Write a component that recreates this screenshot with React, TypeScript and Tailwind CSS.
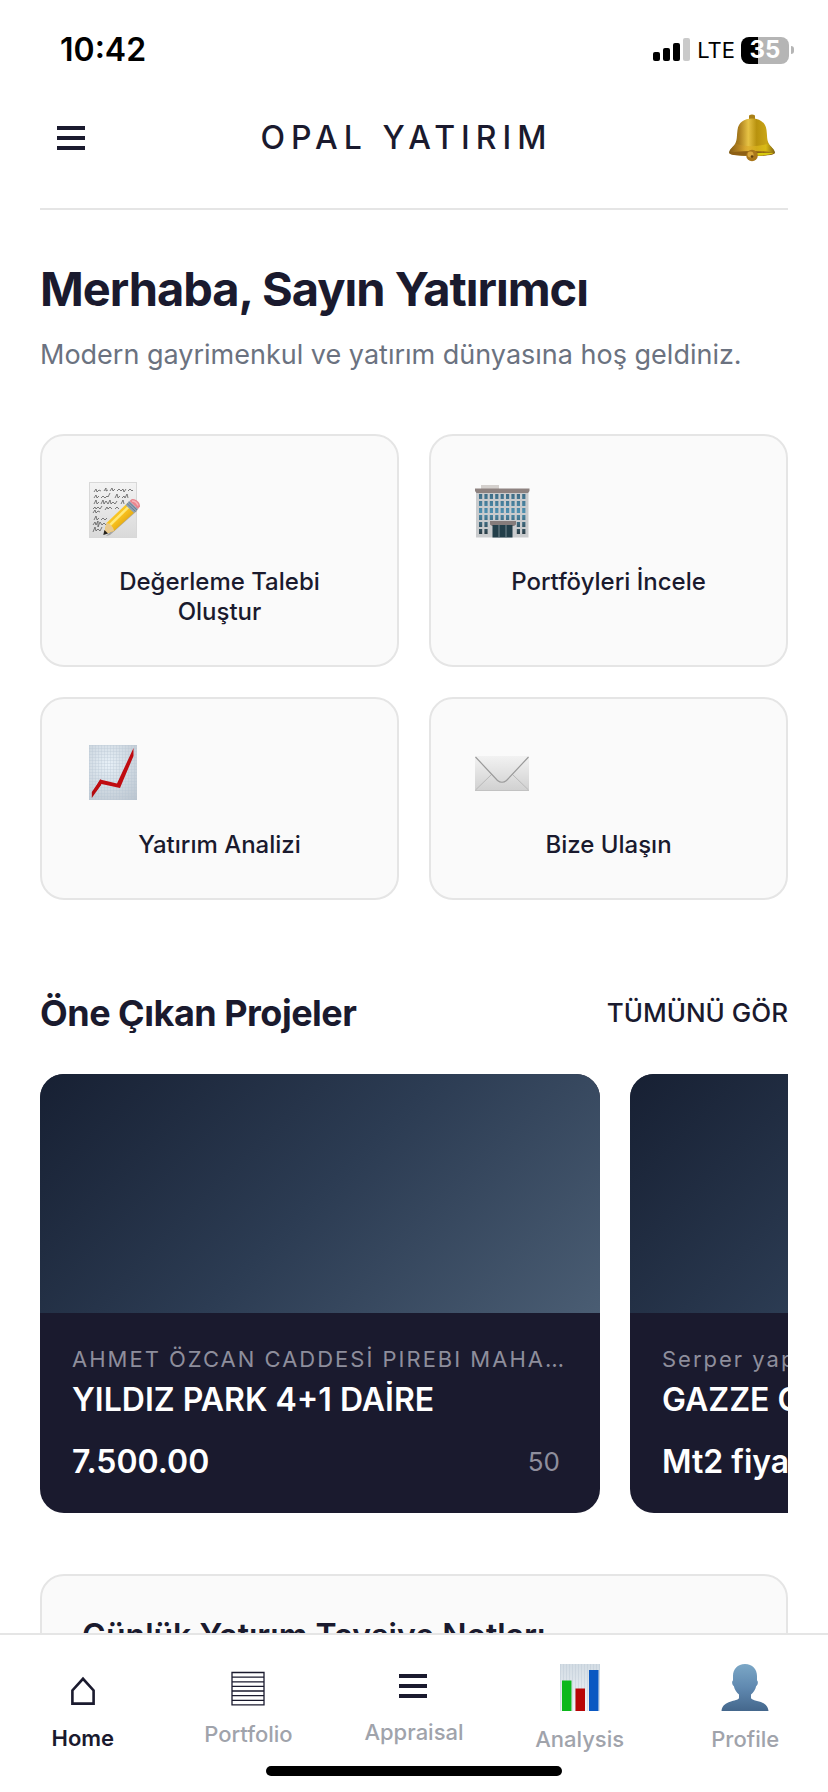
import type { ReactNode } from "react";

/* ---------- Icons ---------- */

const MenuIcon = () => (
	<svg viewBox="0 0 28 24" className="h-6 w-7" fill="#1a1a2e" aria-hidden="true">
		<rect width="28" height="4" />
		<rect y="10" width="28" height="4" />
		<rect y="20" width="28" height="4" />
	</svg>
);

const BellIcon = () => (
	<svg viewBox="0 0 48 48" className="h-12 w-12" aria-hidden="true">
		<defs>
			<linearGradient id="bellBody" x1="0" x2="1" y1="0" y2="0">
				<stop offset="0" stopColor="#7d5a14" />
				<stop offset="0.22" stopColor="#a97c1c" />
				<stop offset="0.42" stopColor="#e6c244" />
				<stop offset="0.6" stopColor="#b8920e" />
				<stop offset="0.82" stopColor="#c9a516" />
				<stop offset="1" stopColor="#6d5210" />
			</linearGradient>
			<linearGradient id="bellRim" x1="0" x2="1" y1="0" y2="0">
				<stop offset="0" stopColor="#8a5d18" />
				<stop offset="0.35" stopColor="#d9a52c" />
				<stop offset="0.8" stopColor="#e0c414" />
				<stop offset="1" stopColor="#8b6d12" />
			</linearGradient>
		</defs>
		<path d="M21 1.500q3-2 6 0v5h-6z" fill="#a98018" />
		<path
			d="M24 4.500c8 0 13.500 4 14.500 11.500.8 6 .2 9.500 2.200 13.500 1.600 3.200 6 5.500 6.300 9.500 0 1-8 3-23 3s-23-2-23-3c.3-4 4.700-6.300 6.300-9.500 2-4 1.400-7.500 2.200-13.500C10.500 8.500 16 4.500 24 4.500z"
			fill="url(#bellBody)"
		/>
		<path d="M7.500 29.500c9 3.500 24 3.500 33 0 1.500 3 5 5 6 8-12 4-33 4-45 0 1-3 4.500-5 6-8z" fill="url(#bellRim)" opacity="0.7" />
		<ellipse cx="24" cy="39.500" rx="22" ry="2.500" fill="#8e5f14" />
		<path d="M26 39.500c7-.6 14-1 20-.8-3 2-12 3-20 3z" fill="#d8cb10" />
		<circle cx="24" cy="41.500" r="5.800" fill="#a9761b" />
		<circle cx="22.500" cy="40.500" r="3" fill="#d9a63c" />
		<circle cx="24" cy="42.500" r="1.300" fill="#5e3d0e" />
	</svg>
);

const MemoIcon = () => (
	<svg viewBox="0 0 62 65" className="h-[65px] w-[62px]" aria-hidden="true">
		<defs>
			<linearGradient id="memoPaper" x1="0" x2="0" y1="0" y2="1">
				<stop offset="0" stopColor="#f3f3f3" />
				<stop offset="1" stopColor="#d9d9d9" />
			</linearGradient>
			<linearGradient id="pencil" x1="0" x2="1" y1="0" y2="1">
				<stop offset="0" stopColor="#ffd93f" />
				<stop offset="0.5" stopColor="#f6be1c" />
				<stop offset="1" stopColor="#b77a08" />
			</linearGradient>
		</defs>
		<rect x="7.500" y="6.500" width="47" height="55" fill="url(#memoPaper)" stroke="#d8d8d8" />
		<g fill="none" stroke="#5c5c5c" strokeWidth="0.800">
			<path d="M12 16l2-3 1 3 2-2 2 1M22 15l2-3 0 3 2-1M28 15l2-3 1 3 2-2M35 15l2-2 2 2 2-2 1 3 2-3M46 15l2-2 2 2 1-1" />
			<path d="M12 22l2-3 1 3 2-2M19 22l2-2 2 2 2-2 1 1 2-4M33 22l2-4 1 4 2-2M40 22l2-2 1 2 2-4 1 4" />
			<path d="M12 28l2-4 1 4 2-2M19 28l2-4 1 4 2-3 2 3 2-4 1 4 2-2 2 2 2-3M39 28l2-4 1 4" />
			<path d="M11 33l2-2 1 2 2-2 2 2 2-3M23 34l2-3 1 2 2-2 2 2M33 33l2-2 2 2" />
			<path d="M11 37l2-3 1 3 2-2 2 1" />
			<path d="M12 44l2-4 1 4 2-2M19 44l2-2 2 2 2-2" />
			<path d="M11 49l2-3 1 3 2-4 0 6 2-5 2 3 2-2 2 2" />
			<path d="M11 56l2-5 1 4 2-2 2 2 2-4" />
		</g>
		<path d="M24 60l4-1 27-24 2-5-3 1z" fill="#000" opacity="0.25" />
		<path d="M22 58l2.500-11L46 26.500l8.500 8L32 55z" fill="url(#pencil)" />
		<path d="M27 50l21-20.500" stroke="#ffe978" strokeWidth="2.500" />
		<path d="M22 58l2.500-11c3 0 7.500 4.500 7.500 8z" fill="#e9c98d" />
		<path d="M21.300 59l1.100-5 3.600 3.500z" fill="#26221c" />
		<path d="M43.500 29l4-4 8.500 8-4 4z" fill="#8fa3b5" />
		<path d="M45 27.500l8.500 8M46.500 26l8.500 8" stroke="#60758a" strokeWidth="0.800" />
		<path d="M47.500 25l2-1.700c3.500-1.500 9 3 8.500 7.200l-2 2.500z" fill="#e8868f" />
		<path d="M50 25c2.500 0 5 2 6 4.500" stroke="#f7b4b8" strokeWidth="1.500" fill="none" />
	</svg>
);

const windowColumns = [8, 13.4, 18.8, 24.2, 29.6, 35, 40.4, 45.8, 51.2];
const windowRows = [18, 25, 32, 39, 46, 53];

const BuildingIcon = () => (
	<svg viewBox="0 0 62 65" className="h-[65px] w-[62px]" aria-hidden="true">
		<defs>
			<linearGradient id="windows" x1="0" x2="0" y1="18" y2="58" gradientUnits="userSpaceOnUse">
				<stop offset="0" stopColor="#3e6c85" />
				<stop offset="0.45" stopColor="#4e90b0" />
				<stop offset="1" stopColor="#2a3d46" />
			</linearGradient>
		</defs>
		<rect x="10" y="9" width="18" height="5" fill="#d4d0cd" />
		<rect x="5" y="14" width="52.500" height="47.500" fill="#c9cbcd" />
		<path d="M4 12.500h54.500v2.500l-1.500 2H5.500L4 15z" fill="#8d8280" />
		{windowRows.map((y) =>
			windowColumns
				.filter((x) => y < 44 || x < 16 || x > 44)
				.map((x) => <rect key={`${x}-${y}`} x={x} y={y} width="3.2" height="5" fill="url(#windows)" />),
		)}
		<path d="M19 45h26v3.500l-2 1.500H21l-2-1.500z" fill="#857c7b" />
		<rect x="21.500" y="49" width="20" height="12.500" fill="#233f4a" />
		<path d="M28 49v12.500M35 49v12.500" stroke="#7f9299" strokeWidth="0.900" />
	</svg>
);

const ChartUpIcon = () => (
	<svg viewBox="0 0 62 65" className="h-[65px] w-[62px]" aria-hidden="true">
		<defs>
			<radialGradient id="chartPaper" cx="0.4" cy="0.35" r="0.9">
				<stop offset="0" stopColor="#e8f1f8" />
				<stop offset="1" stopColor="#b9c3cd" />
			</radialGradient>
			<pattern id="chartGrid" x="7" y="6" width="3" height="3" patternUnits="userSpaceOnUse">
				<path d="M0 0h3M0 0v3" stroke="#b3c2d0" strokeWidth="0.600" />
			</pattern>
		</defs>
		<rect x="7" y="6" width="48" height="55" fill="url(#chartPaper)" />
		<rect x="7" y="6" width="48" height="55" fill="url(#chartGrid)" />
		<path d="M9.800 53l9.200-13v6l-9.200 13z" fill="#b30b0f" />
		<path d="M18 40.500l17 4L51.500 9v8L38 49l-18.500-4-6 8-1-3z" fill="#c00b10" />
	</svg>
);

const EnvelopeIcon = () => (
	<svg viewBox="0 0 62 65" className="h-[65px] w-[62px]" aria-hidden="true">
		<defs>
			<linearGradient id="envelope" x1="0" x2="0" y1="0" y2="1">
				<stop offset="0" stopColor="#f2f2f2" />
				<stop offset="1" stopColor="#d0d0d0" />
			</linearGradient>
		</defs>
		<rect x="4" y="17" width="54" height="35" fill="url(#envelope)" />
		<path d="M4.500 51L21 35M57.500 51L41 35" stroke="#b9b9b9" strokeWidth="1" fill="none" />
		<path d="M4.500 18l22 23.500q4.500 3.500 9 0l22-23.500" stroke="#9a9a9a" strokeWidth="1.200" fill="none" />
		<path d="M4 51.500h54" stroke="#c2c2c2" />
	</svg>
);

const HomeIcon = () => (
	<svg viewBox="0 0 56 61" className="h-[61px] w-14" aria-hidden="true">
		<path d="M17.400 48.600V35.500L28 23.800l10.600 11.700v13.100z" fill="none" stroke="#1a1a2e" strokeWidth="2.600" />
	</svg>
);

const PortfolioIcon = () => (
	<svg viewBox="0 0 56 57" className="h-[57px] w-14" aria-hidden="true">
		<path
			d="M12 17.500h32v32.400h-32zM12 22.200h32M12 26.800h32M12 31.400h32M12 36h32M12 40.600h32M12 45.300h32"
			fill="none"
			stroke="#1a1a2e"
			strokeWidth="1.300"
		/>
	</svg>
);

const AppraisalIcon = () => (
	<svg viewBox="0 0 56 55" className="h-[55px] w-14" fill="#1a1a2e" aria-hidden="true">
		<rect x="13" y="19" width="28" height="4" />
		<rect x="13" y="29" width="28" height="4" />
		<rect x="13" y="39" width="28" height="4" />
	</svg>
);

const AnalysisIcon = () => (
	<svg viewBox="0 0 56 62" className="h-[62px] w-14" aria-hidden="true">
		<defs>
			<linearGradient id="barPaper" x1="0" x2="0" y1="0" y2="1">
				<stop offset="0" stopColor="#d3dce4" />
				<stop offset="1" stopColor="#f1f5f9" />
			</linearGradient>
			<pattern id="barGrid" x="8" y="9" width="3" height="47" patternUnits="userSpaceOnUse">
				<path d="M0 0v47" stroke="#b9c6d2" strokeWidth="0.800" />
			</pattern>
		</defs>
		<rect x="8" y="9" width="40" height="47" fill="url(#barPaper)" />
		<rect x="8" y="9" width="40" height="47" fill="url(#barGrid)" />
		<rect x="10" y="25.500" width="9.500" height="30.500" fill="#0cb81c" />
		<rect x="23.500" y="33.500" width="9.500" height="22.500" fill="#b80606" />
		<rect x="37" y="15" width="9.500" height="41" fill="#0a58c2" />
	</svg>
);

const ProfileIcon = () => (
	<svg viewBox="0 0 56 62" className="h-[62px] w-14" aria-hidden="true">
		<defs>
			<linearGradient id="bust" x1="0" x2="0" y1="0" y2="1">
				<stop offset="0" stopColor="#7ba7c6" />
				<stop offset="0.5" stopColor="#6089b0" />
				<stop offset="1" stopColor="#44678c" />
			</linearGradient>
		</defs>
		<path
			d="M28 9c7.500 0 12 5 12 12v4.500c1.300.3 1.200 4.500-.8 5.500-.8 3.800-3 6.600-5.200 8.500v3.500c1.500 4 16 1.500 17.500 13H4.500C6 44.500 20.500 47 22 43v-3.500c-2.200-1.900-4.400-4.700-5.200-8.500-2-1-2.100-5.200-.8-5.500V21c0-7 4.500-12 12-12z"
			fill="url(#bust)"
		/>
	</svg>
);

/* ---------- Data ---------- */

const quickActions = [
	{ label: "Değerleme Talebi Oluştur", icon: <MemoIcon /> },
	{ label: "Portföyleri İncele", icon: <BuildingIcon /> },
	{ label: "Yatırım Analizi", icon: <ChartUpIcon /> },
	{ label: "Bize Ulaşın", icon: <EnvelopeIcon /> },
];

const projects = [
	{
		address: "AHMET ÖZCAN CADDESİ PIREBI MAHA…",
		title: "YILDIZ PARK 4+1 DAİRE",
		price: "7.500.00",
		size: "50",
	},
	{ address: "Serper yapı", title: "GAZZE CADDESİ", price: "Mt2 fiyatı", size: "" },
];

const tabs = [
	{ label: "Home", icon: <HomeIcon />, active: true },
	{ label: "Portfolio", icon: <PortfolioIcon />, active: false },
	{ label: "Appraisal", icon: <AppraisalIcon />, active: false },
	{ label: "Analysis", icon: <AnalysisIcon />, active: false },
	{ label: "Profile", icon: <ProfileIcon />, active: false },
];

/* ---------- Components ---------- */

const StatusBar = () => (
	<div className="flex h-[100px] shrink-0 items-center justify-between pr-[34px] pl-[60px] text-black">
		<span className="text-[32px] leading-10 font-semibold">10:42</span>
		<div className="flex items-center">
			<svg viewBox="0 0 38 24" className="mr-1.5 h-6 w-[38px]" aria-hidden="true">
				<rect x="0" y="14" width="7" height="9" rx="2" />
				<rect x="10" y="10" width="7" height="13" rx="2" />
				<rect x="20" y="5" width="7" height="18" rx="2" />
				<rect x="30" y="0" width="7" height="23" rx="2" fill="#cacaca" />
			</svg>
			<span className="mr-1.5 text-[22px] leading-7">LTE</span>
			<div className="flex h-[27px] w-12 items-center justify-center rounded-lg bg-linear-to-r from-black from-35% to-[#b5b5b5] to-35% text-[24px] leading-7 font-bold text-white">
				35
			</div>
			<div className="ml-0.5 h-2 w-[3px] rounded-r-full bg-[#b5b5b5]"></div>
		</div>
	</div>
);

const Header = () => (
	<header className="mx-10 flex h-[110px] shrink-0 items-center justify-between border-b-2 border-[#e5e5e5] pr-3 pb-8 pl-[17px]">
		<button type="button" aria-label="Menü">
			<MenuIcon />
		</button>
		<span className="text-[32px] leading-10 font-medium tracking-[6px]">OPAL YATIRIM</span>
		<button type="button" aria-label="Bildirimler">
			<BellIcon />
		</button>
	</header>
);

type ActionCardProps = {
	label: string;
	icon: ReactNode;
};

const ActionCard = ({ label, icon }: ActionCardProps) => (
	<button
		type="button"
		className="flex flex-col items-start rounded-3xl border-2 border-[#e5e5e5] bg-[#fafafa] px-10 pt-10 pb-[38px]"
	>
		{icon}
		<span className="mt-[26px] w-full text-center text-[24px] leading-[30px] font-medium">{label}</span>
	</button>
);

type ProjectCardProps = {
	address: string;
	title: string;
	price: string;
	size: string;
};

const ProjectCard = ({ address, title, price, size }: ProjectCardProps) => (
	<article className="w-[560px] shrink-0 overflow-hidden rounded-3xl bg-[#1a1a2e] text-white">
		<div className="h-[239px] bg-linear-135 from-[#172033] via-[#2c3c53] to-[#4a5d73]"></div>
		<div className="p-8">
			<p className="truncate text-[22px] leading-7 tracking-[2px] text-[#8e8e9c]">{address}</p>
			<h3 className="mt-2 truncate text-[32px] leading-[38px] font-semibold">{title}</h3>
			<div className="mt-6 flex items-center justify-between pr-2">
				<span className="text-[32px] leading-[38px] font-semibold">{price}</span>
				<span className="text-[26px] leading-[38px] text-[#8e8e9c]">{size}</span>
			</div>
		</div>
	</article>
);

const BottomNav = () => (
	<nav className="flex h-[159px] shrink-0 flex-col items-center justify-between border-t-2 border-[#e5e5e5] bg-white pt-5 pb-4">
		<div className="grid w-full grid-cols-5 items-start">
			{tabs.map((tab) => (
				<a key={tab.label} href="#" className="flex flex-col items-center gap-2">
					{tab.icon}
					<span
						className={
							tab.active
								? "text-[22px] leading-7 font-semibold"
								: "text-[22px] leading-7 font-medium text-[#a0a3ab]"
						}
					>
						{tab.label}
					</span>
				</a>
			))}
		</div>
		{/* Home indicator */}
		<div className="h-2.5 w-[296px] shrink-0 rounded-full bg-black"></div>
	</nav>
);

const App = () => {
	return (
		<div className="flex h-screen flex-col bg-white font-['Inter',sans-serif] text-[#1a1a2e]">
			<StatusBar />
			<Header />
			<main className="min-h-0 flex-1 overflow-y-auto px-10 pt-[51px] [scrollbar-width:none]">
				<h1 className="text-[47px] leading-14 font-bold tracking-[-1px]">Merhaba, Sayın Yatırımcı</h1>
				<p className="mt-5 text-[27px] leading-9 text-[#6b7280]">
					Modern gayrimenkul ve yatırım dünyasına hoş geldiniz.
				</p>

				<section className="mt-[61px] grid grid-cols-2 gap-[30px]">
					{quickActions.map((action) => (
						<ActionCard key={action.label} {...action} />
					))}
				</section>

				<section className="mt-[91px]">
					<div className="mb-[39px] flex items-center justify-between">
						<h2 className="text-[36px] leading-11 font-bold tracking-[-0.5px]">Öne Çıkan Projeler</h2>
						<a href="#" className="text-[26px] leading-8 font-medium">
							TÜMÜNÜ GÖR
						</a>
					</div>
					<div className="flex gap-[30px] overflow-x-auto [scrollbar-width:none]">
						{projects.map((project) => (
							<ProjectCard key={project.title} {...project} />
						))}
					</div>
				</section>

				<section className="mt-[61px] rounded-3xl border-2 border-[#e5e5e5] bg-[#fafafa] p-10">
					<h2 className="text-[32px] leading-10 font-semibold">Günlük Yatırım Tavsiye Notları</h2>
				</section>
			</main>
			<BottomNav />
		</div>
	);
};

export default App;
